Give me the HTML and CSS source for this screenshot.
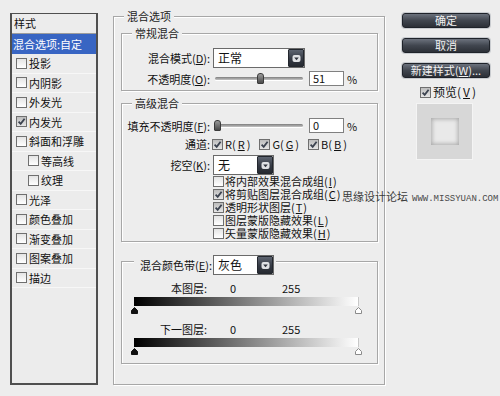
FILE: index.html
```html
<!DOCTYPE html>
<html lang="zh-CN">
<head>
<meta charset="utf-8">
<title>图层样式</title>
<link rel="stylesheet" href="styles.css">
</head>
<body>
<div class="dialog">
  <div class="styles">
    <div class="styles-head">样式</div>
    <div class="srow sel">混合选项:自定</div>
    <div class="srow"><span class="cb"></span>投影</div>
    <div class="srow"><span class="cb"></span>内阴影</div>
    <div class="srow"><span class="cb"></span>外发光</div>
    <div class="srow"><span class="cb on"><svg viewBox="0 0 9 9" width="9" height="9"><path d="M1.6 4.6 L3.7 6.8 L7.6 1.8" fill="none" stroke="#3c4350" stroke-width="1.8"/></svg></span>内发光</div>
    <div class="srow"><span class="cb"></span>斜面和浮雕</div>
    <div class="srow sub"><span class="cb"></span>等高线</div>
    <div class="srow sub"><span class="cb"></span>纹理</div>
    <div class="srow"><span class="cb"></span>光泽</div>
    <div class="srow"><span class="cb"></span>颜色叠加</div>
    <div class="srow"><span class="cb"></span>渐变叠加</div>
    <div class="srow"><span class="cb"></span>图案叠加</div>
    <div class="srow"><span class="cb"></span>描边</div>
  </div>

  <div class="main group">
    <div class="gtitle">混合选项</div>

    <div class="group inner g1">
      <div class="gtitle">常规混合</div>
      <div class="frow r-mode">
        <span class="lbl">混合模式(<u>D</u>):</span>
        <div class="select w-mode"><span>正常</span><span class="dd"><svg viewBox="0 0 9 9" width="9" height="9"><rect x="0.5" y="1" width="8" height="7" rx="2" fill="#dfe1e4"/><path d="M2.2 3.4 H6.8 L4.5 6.2 Z" fill="#2c313a"/></svg></span></div>
      </div>
      <div class="frow r-op">
        <span class="lbl">不透明度(<u>O</u>):</span>
        <div class="slider"><span class="thumb" style="left:44px"></span></div>
        <div class="num">51</div>
        <span class="pct">%</span>
      </div>
    </div>

    <div class="group inner g2">
      <div class="gtitle">高级混合</div>
      <div class="frow r-fill">
        <span class="lbl">填充不透明度(<u>F</u>):</span>
        <div class="slider"><span class="thumb" style="left:1px"></span></div>
        <div class="num">0</div>
        <span class="pct">%</span>
      </div>
      <div class="frow r-ch">
        <span class="lbl">通道:</span>
        <div class="chs">
          <span class="chk"><span class="cb on"><svg viewBox="0 0 9 9" width="9" height="9"><path d="M1.6 4.6 L3.7 6.8 L7.6 1.8" fill="none" stroke="#3c4350" stroke-width="1.8"/></svg></span>R(<u>R</u>)</span>
          <span class="chk"><span class="cb on"><svg viewBox="0 0 9 9" width="9" height="9"><path d="M1.6 4.6 L3.7 6.8 L7.6 1.8" fill="none" stroke="#3c4350" stroke-width="1.8"/></svg></span>G(<u>G</u>)</span>
          <span class="chk"><span class="cb on"><svg viewBox="0 0 9 9" width="9" height="9"><path d="M1.6 4.6 L3.7 6.8 L7.6 1.8" fill="none" stroke="#3c4350" stroke-width="1.8"/></svg></span>B(<u>B</u>)</span>
        </div>
      </div>
      <div class="frow r-ko">
        <span class="lbl">挖空(<u>K</u>):</span>
        <div class="select w-small"><span>无</span><span class="dd"><svg viewBox="0 0 9 9" width="9" height="9"><rect x="0.5" y="1" width="8" height="7" rx="2" fill="#dfe1e4"/><path d="M2.2 3.4 H6.8 L4.5 6.2 Z" fill="#2c313a"/></svg></span></div>
      </div>
      <div class="cblist">
        <div class="cbitem"><span class="cb"></span>将内部效果混合成组(<u>I</u>)</div>
        <div class="cbitem"><span class="cb on"><svg viewBox="0 0 9 9" width="9" height="9"><path d="M1.6 4.6 L3.7 6.8 L7.6 1.8" fill="none" stroke="#3c4350" stroke-width="1.8"/></svg></span>将剪贴图层混合成组(<u>C</u>)</div>
        <div class="cbitem"><span class="cb on"><svg viewBox="0 0 9 9" width="9" height="9"><path d="M1.6 4.6 L3.7 6.8 L7.6 1.8" fill="none" stroke="#3c4350" stroke-width="1.8"/></svg></span>透明形状图层(<u>T</u>)</div>
        <div class="cbitem"><span class="cb"></span>图层蒙版隐藏效果(<u>L</u>)</div>
        <div class="cbitem"><span class="cb"></span>矢量蒙版隐藏效果(<u>H</u>)</div>
      </div>
    </div>

    <div class="group inner g3">
      <div class="legend">
        <span class="llabel">混合颜色带(<u>E</u>):</span>
        <div class="select w-small"><span>灰色</span><span class="dd"><svg viewBox="0 0 9 9" width="9" height="9"><rect x="0.5" y="1" width="8" height="7" rx="2" fill="#dfe1e4"/><path d="M2.2 3.4 H6.8 L4.5 6.2 Z" fill="#2c313a"/></svg></span></div>
      </div>
      <div class="lrow"><span class="llbl">本图层:</span><span class="v0">0</span><span>255</span></div>
      <div class="grad"></div>
      <div class="tris">
        <svg viewBox="0 0 7 7" width="7" height="7"><path d="M3.5 0.5 L6.5 3.5 V6.5 H0.5 V3.5 Z" fill="#111" stroke="#111"/></svg>
        <svg viewBox="0 0 7 7" width="7" height="7"><path d="M3.5 0.5 L6.5 3.5 V6.5 H0.5 V3.5 Z" fill="#fff" stroke="#8a8a8a"/></svg>
      </div>
      <div class="lrow lrow2"><span class="llbl">下一图层:</span><span class="v0">0</span><span>255</span></div>
      <div class="grad"></div>
      <div class="tris">
        <svg viewBox="0 0 7 7" width="7" height="7"><path d="M3.5 0.5 L6.5 3.5 V6.5 H0.5 V3.5 Z" fill="#111" stroke="#111"/></svg>
        <svg viewBox="0 0 7 7" width="7" height="7"><path d="M3.5 0.5 L6.5 3.5 V6.5 H0.5 V3.5 Z" fill="#fff" stroke="#8a8a8a"/></svg>
      </div>
    </div>
  </div>

  <div class="side">
    <div class="btns">
      <div class="btn">确定</div>
      <div class="btn">取消</div>
      <div class="btn">新建样式(<u>W</u>)...</div>
    </div>
    <div class="pv"><span class="cb on"><svg viewBox="0 0 9 9" width="9" height="9"><path d="M1.6 4.6 L3.7 6.8 L7.6 1.8" fill="none" stroke="#3c4350" stroke-width="1.8"/></svg></span>预览(<u>V</u>)</div>
    <div class="preview"><div class="preview-in"></div></div>
  </div>
</div>
<div class="watermark">思缘设计论坛<span class="wm-en">WWW.MISSYUAN.COM</span></div>
</body>
</html>
```

FILE: styles.css
```css
html, body {
  margin: 0;
  padding: 0;
}
body {
  width: 500px;
  height: 396px;
  overflow: hidden;
  position: relative;
  background: #ededed;
  font-family: "Noto Sans CJK SC", sans-serif;
  font-size: 11px;
  line-height: 14px;
  color: #111;
}
u { text-decoration: underline; text-underline-offset: 1px; }

.dialog {
  display: flex;
  align-items: flex-start;
  padding: 13px 0 0 10px;
}

/* left styles list */
.styles {
  width: 88px;
  height: 372px;
  box-sizing: border-box;
  border-style: solid;
  border-color: #4f4f4f;
  border-width: 1px 2px 2px 2px;
  background: #ececec;
  flex: none;
}
.styles-head {
  height: 19px;
  line-height: 19px;
  padding-left: 2px;
  border-bottom: 1px solid #9c9c9c;
}
.srow {
  height: 19.5px;
  box-sizing: border-box;
  display: flex;
  align-items: center;
  gap: 2px;
  padding-left: 4px;
  border-bottom: 1px solid #f7f7f7;
  white-space: nowrap;
}
.srow.sel {
  height: 20px;
  padding-left: 1px;
  background: #3865c3;
  color: #fff;
  border-bottom: none;
}
.srow.sub { padding-left: 16px; }

/* checkbox */
.cb {
  width: 11px;
  height: 11px;
  box-sizing: border-box;
  border: 1px solid #6f6f6f;
  background: linear-gradient(#e4e4e4, #ffffff);
  flex: none;
  display: inline-flex;
  align-items: center;
  justify-content: center;
}
.cb.on { background: linear-gradient(#bdbdbd, #e6e6e6); }
.cb svg { display: block; }

/* groups */
.group {
  border: 1px solid #a7a7a7;
  box-shadow: inset 1px 1px 0 #fff, 1px 1px 0 #fff;
}
.main {
  width: 272px;
  height: 369px;
  box-sizing: border-box;
  margin: 3px 0 0 15px;
  flex: none;
}
.gtitle {
  width: fit-content;
  margin: -8px 0 0 10px;
  padding: 0 3px;
  background: #ededed;
  line-height: 14px;
  color: #222;
}
.inner { margin: 0 6px 0 7px; }
.g1 { margin-top: 10px; padding-bottom: 4px; }
.g2 { margin-top: 12px; padding-bottom: 1px; }
.g3 { margin-top: 19px; padding-bottom: 8px; }

.frow {
  display: flex;
  align-items: center;
}
.lbl {
  width: 88px;
  margin-right: 3px;
  text-align: right;
  white-space: nowrap;
  flex: none;
}
.r-mode { margin-top: 8px; height: 20px; }
.r-op { margin-top: 3px; height: 15px; }
.r-fill { margin-top: 8px; height: 15px; }
.r-ch { margin-top: 4px; height: 14px; }
.r-ko { margin-top: 4px; height: 20px; }

/* select */
.select {
  height: 20px;
  box-sizing: border-box;
  border: 1px solid #6a6a6a;
  background: #fff;
  display: flex;
  align-items: center;
  padding-left: 4px;
  flex: none;
  font-size: 12px;
}
.w-mode { width: 92px; }
.w-small { width: 61px; }
.dd {
  margin-left: auto;
  width: 16px;
  height: 18px;
  box-sizing: border-box;
  border: 1px solid #23272e;
  border-radius: 1px;
  background: linear-gradient(#5d6470, #353a44 55%, #262a31);
  display: flex;
  align-items: center;
  justify-content: center;
}
.dd svg { display: block; }

/* slider */
.slider {
  width: 90px;
  height: 15px;
  position: relative;
  flex: none;
}
.slider::before {
  content: "";
  position: absolute;
  left: 2px;
  right: 0;
  top: 6px;
  height: 3px;
  border-radius: 2px;
  background: linear-gradient(#7d7d7d, #c4c4c4);
  box-shadow: 0 1px 0 #fff;
}
.thumb {
  position: absolute;
  top: 2px;
  width: 7px;
  height: 11px;
  box-sizing: border-box;
  border: 1px solid #3b3b3b;
  border-radius: 3px 3px 1px 1px;
  background: linear-gradient(#9a9a9a, #4a4a4a);
}
.num {
  width: 35px;
  height: 15px;
  box-sizing: border-box;
  margin-left: 6px;
  padding-left: 3px;
  border: 1px solid #808080;
  background: #fff;
  line-height: 13px;
  flex: none;
}
.pct { margin-left: 3px; }

/* channels */
.chs {
  display: flex;
  gap: 9px;
  margin-left: -1px;
}
.chk {
  display: flex;
  align-items: center;
  gap: 2px;
}

.cblist { margin-left: 91px; }
.cbitem {
  height: 13px;
  line-height: 13px;
  display: flex;
  align-items: center;
  gap: 1px;
  white-space: nowrap;
}

/* blend if */
.legend {
  display: flex;
  align-items: center;
  width: fit-content;
  margin: -7px 0 0 12px;
  padding: 0 2px 0 6px;
  background: #ededed;
  gap: 3px;
}
.llabel {
  width: 70px;
  text-align: right;
  white-space: nowrap;
}
.lrow {
  display: flex;
  height: 14px;
  margin-top: 6px;
}
.lrow2 { margin-top: 8px; }
.llbl {
  width: 85px;
  text-align: right;
  white-space: nowrap;
}
.v0 {
  margin-left: 23px;
  width: 52px;
}
.grad {
  margin: 2px 0 0 12px;
  width: 225px;
  height: 9px;
  box-sizing: border-box;
  background: linear-gradient(to right, #000, #fff);
  border-right: 1px solid #c8c8c8;
}
.tris {
  margin: 1px 0 0 9px;
  width: 231px;
  height: 7px;
  display: flex;
  justify-content: space-between;
}
.tris svg { display: block; }

/* right column */
.side {
  width: 88px;
  margin-left: 17px;
  display: flex;
  flex-direction: column;
  flex: none;
}
.btns {
  display: flex;
  flex-direction: column;
  gap: 10px;
}
.btn {
  height: 15px;
  box-sizing: border-box;
  border: 1px solid #1f232a;
  border-radius: 3px;
  background: linear-gradient(#6c727d, #41464f 50%, #2c3037);
  box-shadow: 0 0 0 1px #c9ccd0;
  color: #f2f2f2;
  text-align: center;
  font-size: 11px;
  line-height: 13px;
  white-space: nowrap;
}
.pv {
  display: flex;
  align-items: center;
  gap: 2px;
  height: 14px;
  margin: 7px 0 0 18px;
  font-size: 12px;
}
.preview {
  width: 57px;
  height: 57px;
  box-sizing: border-box;
  margin: 4px 0 0 14px;
  background: #d7d7d7;
  border: 1px solid #f4f4f4;
  display: flex;
  align-items: center;
  justify-content: center;
}
.preview-in {
  width: 28px;
  height: 27px;
  background: #e9e9e9;
  box-shadow: inset 0 0 4px 1px #a8a8a8;
}

/* watermark */
.watermark {
  position: absolute;
  left: 342px;
  top: 189px;
  font-size: 11px;
  line-height: 14px;
  color: #3a3a3a;
  white-space: nowrap;
}
.wm-en {
  margin-left: 4px;
  font-family: "Liberation Mono", monospace;
  font-size: 9px;
  color: #4a4a4a;
}
```
